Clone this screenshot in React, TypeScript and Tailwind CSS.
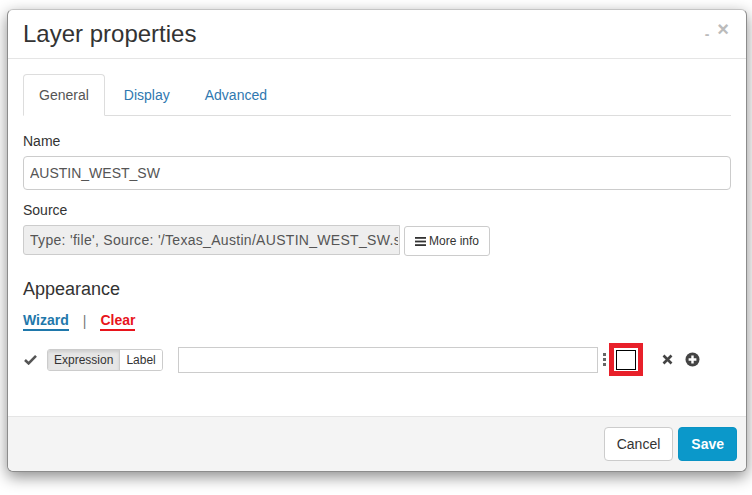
import { useState } from "react";

const TABS = ["General", "Display", "Advanced"];

function BarsIcon() {
  return (
    <svg width="11" height="9" viewBox="0 0 11 9" className="mr-[3px]">
      <rect x="0" y="0" width="11" height="1.8" fill="#333" />
      <rect x="0" y="3.6" width="11" height="1.8" fill="#333" />
      <rect x="0" y="7.2" width="11" height="1.8" fill="#333" />
    </svg>
  );
}

function CheckIcon() {
  return (
    <svg width="13" height="11" viewBox="0 0 13 11">
      <path d="M1 6 L4.6 9.4 L12 1.8" fill="none" stroke="#555" strokeWidth="2.6" />
    </svg>
  );
}

function TimesIcon() {
  return (
    <svg width="11" height="11" viewBox="0 0 11 11">
      <path d="M1.5 1.5 L9.5 9.5 M9.5 1.5 L1.5 9.5" stroke="#444" strokeWidth="2.6" />
    </svg>
  );
}

function PlusCircleIcon() {
  return (
    <svg width="15" height="15" viewBox="0 0 15 15">
      <circle cx="7.5" cy="7.5" r="7" fill="#444" />
      <path d="M7.5 3.6 V11.4 M3.6 7.5 H11.4" stroke="#fff" strokeWidth="2.4" />
    </svg>
  );
}

export default function App() {
  const [tab, setTab] = useState(0);
  const [mode, setMode] = useState("Expression");

  return (
    <div className="min-h-[495px] bg-white pl-[7px] pt-[9px] font-['Liberation_Sans',Arial,sans-serif] text-[14px] text-[#333]">
      <div className="w-[740px] rounded-[6px] border border-[#8c8c8c] border-t-[#c4c4c4] bg-white shadow-[0_5px_15px_rgba(0,0,0,0.45)]">
        {/* header */}
        <div className="flex h-[49px] items-center justify-between border-b border-[#e5e5e5] pl-[15px] pr-[17px]">
          <h3 className="text-[24px] leading-[26px] text-[#333]">Layer properties</h3>
          <div className="mb-[6px] flex items-start gap-[8px] text-[#bbb]">
            <span className="mt-[5px] text-[14px] font-bold leading-[14px]">-</span>
            <span className="text-[20px] font-bold leading-[14px]">×</span>
          </div>
        </div>

        {/* body */}
        <div className="h-[357px] px-[15px] pt-[15px]">
          <ul className="flex h-[42px] border-b border-[#ddd]">
            {TABS.map((t, i) => (
              <li key={t} className={i === 0 ? "" : "ml-[3px]"}>
                <button
                  onClick={() => setTab(i)}
                  className={`mb-[-1px] h-[42px] rounded-t-[4px] border px-[15px] leading-[20px] ${
                    tab === i
                      ? "border-[#ddd] border-b-white bg-white text-[#555]"
                      : "border-transparent text-[#2f78b0]"
                  }`}
                >
                  {t}
                </button>
              </li>
            ))}
          </ul>

          <div className="mt-[15px]">
            <label className="block leading-[20px]">Name</label>
            <input
              defaultValue="AUSTIN_WEST_SW"
              className="mt-[5px] block h-[34px] w-full rounded-[4px] border border-[#ccc] px-[6px] text-[14px] text-[#555] outline-none"
            />

            <label className="mt-[10px] block leading-[20px]">Source</label>
            <div className="mt-[5px] flex items-start gap-[4px]">
              <input
                readOnly
                value="Type: 'file', Source: '/Texas_Austin/AUSTIN_WEST_SW.shp'"
                className="h-[30px] w-[377px] rounded-l-[3px] border border-[#ccc] bg-[#eee] pl-[6px] pr-[1px] text-[14px] tracking-[0.3px] text-[#555] outline-none"
              />
              <button className="mt-px flex h-[30px] items-center rounded-[3px] border border-[#ccc] bg-white px-[10px] text-[12px] text-[#333]">
                <BarsIcon />
                More info
              </button>
            </div>

            <h4 className="mt-[23px] text-[18px] leading-[20px]">Appearance</h4>

            <div className="mt-[12px] flex items-center text-[14px] font-bold leading-[18px]">
              <a className="border-b-2 border-[#1f78ab] text-[#1f78ab]">Wizard</a>
              <span className="mx-[14px] font-normal text-[#777]">|</span>
              <a className="border-b-2 border-[#e8141c] text-[#e8141c]">Clear</a>
            </div>

            <div className="mt-[12px] flex items-center">
              <span className="ml-px"><CheckIcon /></span>
              <div className="ml-[10px] flex h-[22px] overflow-hidden rounded-[3px] border border-[#ccc] text-[12px]">
                {["Expression", "Label"].map((m) => (
                  <button
                    key={m}
                    onClick={() => setMode(m)}
                    className={`px-[6px] leading-[20px] ${
                      mode === m
                        ? "border-r border-[#ccc] bg-[#e6e6e6] shadow-[inset_0_2px_3px_rgba(0,0,0,0.1)]"
                        : "bg-white"
                    }`}
                  >
                    {m}
                  </button>
                ))}
              </div>
              <input className="ml-[15px] h-[26px] w-[420px] border border-[#ccc] outline-none" />
              <div className="ml-[5px] flex flex-col gap-[2px]">
                <span className="h-[3px] w-[3px] bg-[#666]" />
                <span className="h-[3px] w-[3px] bg-[#666]" />
                <span className="h-[3px] w-[3px] bg-[#666]" />
              </div>
              <div className="ml-[3px] flex h-[33px] w-[34px] items-center justify-center bg-[#e8202a] p-[5px]">
                <div className="flex h-full w-full items-center justify-center bg-white">
                  <div className="h-[20px] w-[20px] border border-black bg-white" />
                </div>
              </div>
              <span className="ml-[19px]"><TimesIcon /></span>
              <span className="ml-[12px]"><PlusCircleIcon /></span>
            </div>
          </div>
        </div>

        {/* footer */}
        <div className="flex justify-end gap-[5px] rounded-b-[6px] border-t border-[#e5e5e5] bg-[#f4f4f4] px-[9px] py-[10px]">
          <button className="h-[34px] rounded-[4px] border border-[#ccc] bg-white px-[12px] text-[14px] text-[#333]">
            Cancel
          </button>
          <button className="h-[34px] rounded-[4px] border border-[#0a93c4] bg-[#0b98ca] px-[12px] text-[14px] font-bold text-white">
            Save
          </button>
        </div>
      </div>
    </div>
  );
}
